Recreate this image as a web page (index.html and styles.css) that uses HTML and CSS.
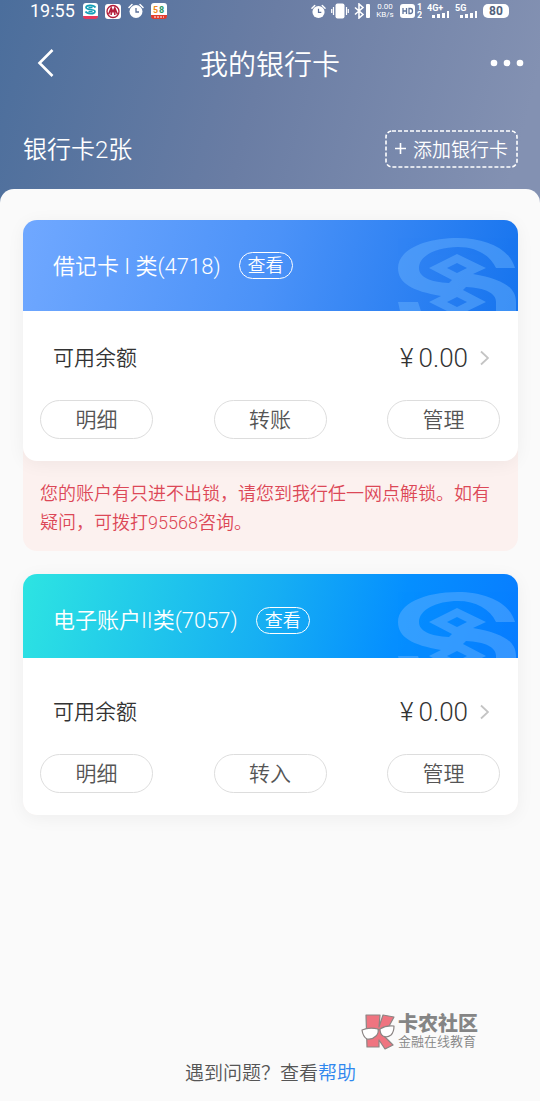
FILE: index.html
```html
<!DOCTYPE html>
<html lang="zh-CN">
<head>
<meta charset="utf-8">
<meta name="viewport" content="width=device-width, initial-scale=1">
<title>我的银行卡</title>
<link rel="stylesheet" href="styles.css">
</head>
<body>
<svg class="defs" width="0" height="0" aria-hidden="true">
  <symbol id="emblem" viewBox="0 0 120 73">
    <path fill-rule="evenodd" d="M117 30C112 11 88 0 60 0C26 0 0 12 0 30C0 45 14 53 43 58L31 64L59 78L88 64L65 52L68 49C87 50 98 55 98 64V73H118V64C118 49 104 41 75 36L88 30L59 16L31 30L54 42L51 45C32 44 21 39 21 30C21 18 38 9 60 9C78 9 92 17 98 30ZM49 30L59 25L69 30L59 35ZM49 64L59 59L69 64L59 69Z"/>
    <path d="M0 64H20L23 73H2Z"/>
  </symbol>
  <symbol id="alarm" viewBox="0 0 16 16">
    <path d="M1 4.500L4 1.500M12 1.500L15 4.500" fill="none" stroke="#fff" stroke-width="1.500" stroke-linecap="round"/>
    <circle cx="8" cy="8.500" r="6.500" fill="#fff"/>
    <path d="M8 5V9H11" fill="none" stroke="#5b7099" stroke-width="1.300"/>
  </symbol>
</svg>

<header class="hero">
  <div class="status">
    <div class="status-left">
      <span class="time">19:55</span>
      <svg width="15" height="16" viewBox="0 0 15 16"><rect width="15" height="15" rx="3" fill="#fff"/><path d="M0 13H15Q15 16 12 16H3Q0 16 0 13Z" fill="#e8385b"/><path d="M12.500 4.500C11 2 3 1.500 3 4.500S12 5.500 12 8.500S4 11 2.500 8.500M5.500 4.500H9.500M5.500 8.500H9.500" fill="none" stroke="#159eb7" stroke-width="1.700"/></svg>
      <svg width="16" height="15" viewBox="0 0 16 15"><rect width="16" height="15" rx="3" fill="#fff"/><circle cx="8" cy="7.500" r="6" fill="none" stroke="#b31c3a" stroke-width="1.300"/><path d="M3.500 10.500L6.200 4L8 8L9.800 4L12.500 10.500M6.200 5V11M9.800 5V11" fill="none" stroke="#b31c3a" stroke-width="1.500"/></svg>
      <svg width="16" height="16"><use href="#alarm"/></svg>
      <svg width="16" height="16" viewBox="0 0 16 16"><rect width="16" height="15" rx="3" fill="#fff"/><path d="M0 12H16V13Q16 16 13 16H3Q0 16 0 13Z" fill="#e33b2b"/><text x="2" y="10" class="app-num" fill="#ef8a1d">5</text><text x="8" y="10" class="app-num" fill="#289760">8</text><path d="M3 14H13" stroke="#fff" stroke-width="1" stroke-dasharray="2 1"/></svg>
    </div>
    <div class="status-right">
      <svg width="15" height="15" viewBox="0 0 16 16"><use href="#alarm"/></svg>
      <svg width="18" height="16" viewBox="0 0 18 16" fill="#fff"><rect x="4.500" y="0.500" width="9" height="15" rx="2"/><path d="M2.500 4V12M15.500 4V12M.7 6V10M17.300 6V10" stroke="#fff" stroke-width="1.200"/></svg>
      <svg width="16" height="16" viewBox="0 0 16 16"><path d="M1 4.500L9 11.500L5 15V1L9 4.500L1 11.500" fill="none" stroke="#fff" stroke-width="1.600"/><rect x="12" y="1" width="4" height="14" rx="1" fill="#fff"/></svg>
      <span class="speed"><span>0.00</span><span>KB/s</span></span>
      <svg width="22" height="16" viewBox="0 0 22 16" fill="#fff"><rect y="1" width="15" height="14" rx="3"/><path d="M3 5V11M3 8H6.500M6.500 5V11M9 5.500V10.500H10.500Q12.500 10.500 12.500 8T10.500 5.500Z" fill="none" stroke="#60759c" stroke-width="1.300"/><text x="17" y="7" class="net">1</text><text x="17" y="15" class="net">2</text></svg>
      <svg width="23" height="16" viewBox="0 0 23 16" fill="#fff"><text x="0" y="8" class="net">4G+</text><path d="M5 12h3v3H5zM10 11h3v4h-3zM15 10h3v5h-3zM20 8h2v7h-2z"/></svg>
      <svg width="23" height="16" viewBox="0 0 23 16" fill="#fff"><text x="0" y="8" class="net">5G</text><path d="M5 12h3v3H5zM10 11h3v4h-3zM15 10h3v5h-3zM20 8h2v7h-2z"/></svg>
      <span class="battery">80</span>
    </div>
  </div>

  <nav class="navbar">
    <button class="icon-btn" aria-label="返回"><svg width="18" height="30" viewBox="0 0 18 30"><path d="M15.500 2L2.500 15L15.500 28" fill="none" stroke="#fff" stroke-width="2.600"/></svg></button>
    <h1>我的银行卡</h1>
    <button class="icon-btn more" aria-label="更多"><svg width="34" height="8" viewBox="0 0 34 8" fill="#fff"><circle cx="4" cy="4" r="3.300"/><circle cx="17" cy="4" r="3.300"/><circle cx="30" cy="4" r="3.300"/></svg></button>
  </nav>

  <div class="summary">
    <span class="count">银行卡2张</span>
    <button class="add"><svg class="add-outline" aria-hidden="true"><rect width="100%" height="100%" rx="6"/></svg><svg width="11" height="11" viewBox="0 0 11 11"><path d="M5.500 0V11M0 5.500H11" stroke="#fff" stroke-width="1.600"/></svg><span>添加银行卡</span></button>
  </div>
</header>

<main class="panel">
  <section class="account">
    <article class="card">
      <div class="card-head debit">
        <h2>借记卡 I 类(4718)</h2>
        <button class="view">查看</button>
        <svg class="emblem" width="120" height="73"><use href="#emblem"/></svg>
      </div>
      <div class="card-body">
        <a class="balance" href="#"><span>可用余额</span><span class="amount"><span>¥</span><span>0.00</span></span><svg width="9" height="16" viewBox="0 0 9 16"><path d="M1 1.500L8 8L1 14.500" fill="none" stroke="#c4c4c4" stroke-width="1.800"/></svg></a>
        <div class="actions"><button>明细</button><button>转账</button><button>管理</button></div>
      </div>
    </article>
    <p class="notice">您的账户有只进不出锁，请您到我行任一网点解锁。如有疑问，可拨打95568咨询。</p>
  </section>

  <section class="account">
    <article class="card">
      <div class="card-head electronic">
        <h2>电子账户II类(7057)</h2>
        <button class="view">查看</button>
        <svg class="emblem" width="120" height="73"><use href="#emblem"/></svg>
      </div>
      <div class="card-body">
        <a class="balance" href="#"><span>可用余额</span><span class="amount"><span>¥</span><span>0.00</span></span><svg width="9" height="16" viewBox="0 0 9 16"><path d="M1 1.500L8 8L1 14.500" fill="none" stroke="#c4c4c4" stroke-width="1.800"/></svg></a>
        <div class="actions"><button>明细</button><button>转入</button><button>管理</button></div>
      </div>
    </article>
  </section>

  <footer class="footer">
    <div class="brand">
      <svg width="34" height="37" viewBox="0 0 34 37" stroke="#8b8584" stroke-linejoin="round"><path d="M5 2H19L18 14L22 2L33 4L27 15L22 22L32 32L24 36L18 27V34H6Z" fill="#ef7480" stroke-width="1.200"/><path d="M1 17Q8 14 17 16Q18 20 15 23Q11 27 6 26Q2 24 1 17ZM19 16Q25 12 33 13Q33 19 30 22Q26 25 22 23Q19 21 19 16ZM17 17L19 16.500" fill="#fff" stroke-width="1.200"/></svg>
      <div class="brand-text"><strong>卡农社区</strong><span>金融在线教育</span></div>
    </div>
    <p class="help">遇到问题？查看<a href="#">帮助</a></p>
  </footer>
</main>
</body>
</html>
```
FILE: styles.css
```css
* {
  box-sizing: border-box;
}

body {
  margin: 0;
  min-height: 100vh;
  display: flex;
  flex-direction: column;
  font-family: Roboto, "Noto Sans CJK SC", sans-serif;
  font-weight: 350;
  color: #333;
  background: linear-gradient(105deg, #4b6e9c 0, #6a7da4 270px, #8391b2 540px);
}

h1, h2, p {
  margin: 0;
  font-weight: inherit;
}

button {
  padding: 0;
  border: 0;
  background: none;
  color: inherit;
  font: inherit;
}

a {
  color: inherit;
  text-decoration: none;
}

svg {
  display: block;
  flex: none;
}

.defs {
  position: absolute;
}

.hero {
  color: #fff;
}

.status {
  display: flex;
  justify-content: space-between;
  align-items: center;
  height: 22px;
  padding: 0 31px 0 30px;
}

.status-left {
  display: flex;
  align-items: center;
  gap: 7px;
}

.status-right {
  display: flex;
  align-items: center;
  gap: 5px;
}

.time {
  margin-right: 1px;
  font-size: 18px;
  font-weight: 400;
  line-height: 22px;
}

.speed {
  display: flex;
  flex-direction: column;
  width: 20px;
  font-size: 8px;
  font-weight: 400;
  line-height: 8px;
  text-align: center;
}

.app-num,
.net {
  font-size: 9px;
  font-weight: 700;
}

.battery {
  width: 26px;
  border-radius: 5px;
  background: #fff;
  color: #52617c;
  font-size: 12px;
  font-weight: 700;
  line-height: 14px;
  text-align: center;
}

.navbar {
  display: grid;
  grid-template-columns: 1fr auto 1fr;
  align-items: center;
  height: 82px;
  padding: 0 16px 0 37px;
}

.navbar h1 {
  margin-right: 21px;
  padding-top: 5px;
  font-size: 28px;
  line-height: 40px;
}

.icon-btn {
  justify-self: start;
}

.more {
  justify-self: end;
}

.summary {
  display: flex;
  justify-content: space-between;
  align-items: center;
  height: 85px;
  padding: 4px 22px 0 23px;
}

.count {
  padding-top: 2px;
  font-size: 24px;
  line-height: 34px;
}

.add {
  position: relative;
  display: flex;
  align-items: center;
  gap: 7px;
  height: 38px;
  padding: 0 10px;
  font-size: 19px;
}

.add-outline {
  position: absolute;
  top: 1px;
  left: 1px;
  width: calc(100% - 2px);
  height: calc(100% - 2px);
  overflow: visible;
  fill: none;
  stroke: #fff;
  stroke-width: 1.6;
  stroke-dasharray: 4 2;
}

.panel {
  flex: 1;
  display: flex;
  flex-direction: column;
  gap: 23px;
  padding: 31px 22px 12px 23px;
  border-radius: 14px 14px 0 0;
  background: #fafafa;
}

.account {
  border-radius: 14px;
  background: #fcf1ef;
}

.card {
  display: flex;
  flex-direction: column;
  min-height: 241px;
  border-radius: 14px;
  overflow: hidden;
  background: #fff;
  box-shadow: 0 3px 18px rgba(0, 0, 0, 0.05);
}

.card-head {
  position: relative;
  display: flex;
  align-items: center;
  gap: 18px;
  padding: 0 30px;
  overflow: hidden;
  color: #fff;
}

.debit {
  height: 91px;
  background: linear-gradient(105deg, #70a8ff, #4b92f8 50%, #1674ee);
}

.electronic {
  height: 84px;
  padding-top: 8px;
  background: linear-gradient(105deg, #2de4e2, #16aef3 50%, #058fff 75%, #087cff);
}

.card-head h2 {
  padding-top: 2px;
  font-size: 22px;
  line-height: 32px;
}

.view {
  height: 27px;
  padding: 0 8px;
  border: 1px solid #fff;
  border-radius: 14px;
  font-size: 18px;
  line-height: 26px;
}

.emblem {
  position: absolute;
  top: 18px;
  right: 0;
  fill: #6bb4ff;
  opacity: 0.45;
}

.card-body {
  flex: 1;
  display: flex;
  flex-direction: column;
  justify-content: flex-end;
  gap: 26px;
  padding: 0 18px 22px 17px;
}

.balance {
  display: flex;
  align-items: center;
  padding: 0 11px 0 13px;
  font-size: 21px;
  line-height: 32px;
}

.amount {
  display: flex;
  gap: 5px;
  margin: 0 12px 0 auto;
  font-size: 26px;
}

.actions {
  display: flex;
  justify-content: space-between;
}

.actions button {
  width: 113px;
  height: 39px;
  border: 1px solid #ddd;
  border-radius: 20px;
  color: #555;
  font-size: 21px;
  line-height: 38px;
}

.notice {
  padding: 18px 18px 14px 17px;
  color: #dc4857;
  font-size: 18px;
  line-height: 29px;
}

.footer {
  margin-top: auto;
}

.brand {
  display: flex;
  align-items: center;
  justify-content: flex-end;
  gap: 3px;
  padding-right: 40px;
  color: #858585;
}

.brand-text {
  display: flex;
  flex-direction: column;
  padding-top: 2px;
}

.brand-text strong {
  font-size: 20px;
  font-weight: 900;
  line-height: 20px;
}

.brand-text span {
  font-size: 13px;
  line-height: 16px;
}

.help {
  margin-top: 9px;
  color: #555;
  font-size: 19px;
  line-height: 30px;
  text-align: center;
}

.help a {
  color: #2f87ee;
}
```
